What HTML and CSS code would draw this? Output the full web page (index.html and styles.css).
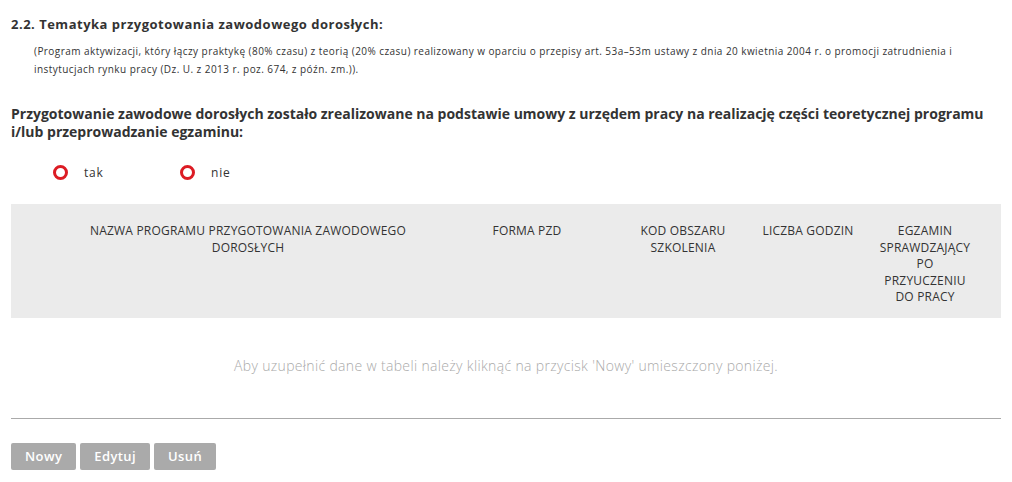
FILE: index.html
```html
<!DOCTYPE html>
<html lang="pl">
<head>
    <meta charset="UTF-8">
    <title>Przygotowanie zawodowe dorosłych</title>
    <link rel="stylesheet" href="styles.css">
</head>
<body>
    <div class="section">
        <h3 class="section-title">2.2. Tematyka przygotowania zawodowego dorosłych:</h3>
        <p class="note">(Program aktywizacji, który łączy praktykę (80% czasu) z teorią (20% czasu) realizowany w oparciu o przepisy art. 53a–53m ustawy z dnia 20 kwietnia 2004 r. o promocji zatrudnienia i instytucjach rynku pracy (Dz. U. z 2013 r. poz. 674, z późn. zm.)).</p>

        <p class="question">Przygotowanie zawodowe dorosłych zostało zrealizowane na podstawie umowy z urzędem pracy na realizację części teoretycznej programu i/lub przeprowadzanie egzaminu:</p>

        <div class="radio-group">
            <label class="radio"><span class="radio-dot"></span>tak</label>
            <label class="radio"><span class="radio-dot"></span>nie</label>
        </div>

        <table class="grid">
            <thead>
                <tr>
                    <th class="col-check"></th>
                    <th class="col-name">Nazwa programu przygotowania zawodowego dorosłych</th>
                    <th class="col-form">Forma PZD</th>
                    <th class="col-code">Kod obszaru szkolenia</th>
                    <th class="col-hours">Liczba godzin</th>
                    <th class="col-exam">Egzamin sprawdzający po przyuczeniu do pracy</th>
                    <th class="col-end"></th>
                </tr>
            </thead>
            <tbody>
                <tr>
                    <td colspan="7" class="empty">Aby uzupełnić dane w tabeli należy kliknąć na przycisk 'Nowy' umieszczony poniżej.</td>
                </tr>
            </tbody>
        </table>

        <div class="actions">
            <button class="btn">Nowy</button>
            <button class="btn">Edytuj</button>
            <button class="btn">Usuń</button>
        </div>
    </div>
</body>
</html>
```

FILE: styles.css
```css
* {
    margin: 0;
    padding: 0;
    box-sizing: border-box;
}

body {
    font-family: 'Open Sans', 'DejaVu Sans', sans-serif;
    color: #333;
    background: #fff;
}

.section {
    padding: 15px 11px 0 11px;
}

.section-title {
    font-size: 13px;
    font-weight: 700;
    line-height: 18px;
    letter-spacing: 0.5px;
}

.note {
    font-size: 10px;
    line-height: 18px;
    padding: 9px 0 0 23px;
    letter-spacing: 0.44px;
}

.question {
    font-size: 14px;
    font-weight: 700;
    line-height: 18px;
    letter-spacing: 0;
    margin-top: 27px;
}

.radio-group {
    display: flex;
    padding: 24px 0 0 42px;
    height: 63px;
}

.radio {
    display: flex;
    align-items: flex-start;
    font-size: 12px;
    line-height: 15px;
    letter-spacing: 0.8px;
    width: 127px;
}

.radio-dot {
    width: 15px;
    height: 15px;
    border: 3px solid #dc1c24;
    border-radius: 50%;
    margin-right: 16px;
}

.grid {
    width: 100%;
    border-collapse: collapse;
    table-layout: fixed;
}

.grid th {
    background: #ebebeb;
    font-size: 12px;
    font-weight: 400;
    line-height: 16.5px;
    text-transform: uppercase;
    text-align: center;
    vertical-align: top;
    padding: 19px 8px 12px;
    letter-spacing: 0.2px;
}

.col-check { width: 49px; }
.col-name { width: 376px; }
.col-form { width: 182px; }
.col-code { width: 130px; }
.col-hours { width: 120px; }
.col-exam { width: 114px; }

.grid .empty {
    font-size: 14px;
    font-weight: 300;
    color: #aaa;
    text-align: center;
    letter-spacing: 0.34px;
    padding: 39px 0 43px;
    border-bottom: 1px solid #aaa;
    line-height: 18px;
}

.actions {
    display: flex;
    gap: 4px;
    margin-top: 24px;
}

.btn {
    background: #aaa;
    color: #fff;
    border: none;
    border-radius: 2px;
    font-family: 'Open Sans', sans-serif;
    font-size: 13px;
    font-weight: 600;
    height: 27px;
    padding: 0 14px;
    letter-spacing: 0.4px;
}
```
